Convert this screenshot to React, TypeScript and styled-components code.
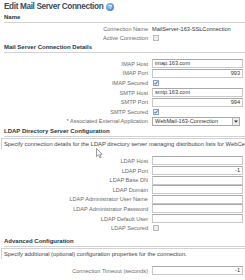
import styled, { createGlobalStyle } from 'styled-components';

const GlobalStyle = createGlobalStyle`
  body {
    margin: 0;
    background: #ffffff;
    font-family: 'Liberation Sans', Arial, sans-serif;
    color: #333333;
  }
`;

const Page = styled.div`
  position: relative;
  width: 245px;
  height: 280px;
  overflow: hidden;
  padding: 1px 0 0 4px;
  box-sizing: border-box;
`;

const Title = styled.h1`
  margin: 0;
  height: 11px;
  display: flex;
  align-items: center;
  gap: 3px;
  font-size: 8.2px;
  font-weight: bold;
  letter-spacing: -0.35px;
  color: #3b4b5b;
`;

const HelpIcon = styled.span`
  width: 8px;
  height: 8px;
  border-radius: 50%;
  background: radial-gradient(circle at 35% 35%, #9cc8f4, #2d6fc4);
  color: #ffffff;
  font-size: 6px;
  line-height: 8px;
  text-align: center;
  letter-spacing: 0;
`;

const SectionHeader = styled.h2<{ $top: number }>`
  margin: ${(p) => p.$top}px 0 0 0;
  height: 9px;
  line-height: 9px;
  font-size: 6px;
  font-weight: bold;
  color: #253545;
  border-bottom: 1px solid #d2d2d2;
`;

const Description = styled.div`
  margin: 1px 0 0 -3px;
  padding: 2px 0 0 2px;
  height: 8px;
  font-size: 5.8px;
  line-height: 6px;
  white-space: nowrap;
  color: #444444;
  border-top: 1px solid #d2d2d2;
  border-left: 1px solid #d2d2d2;
`;

const Fields = styled.div<{ $top: number }>`
  margin-top: ${(p) => p.$top}px;
  display: grid;
  grid-template-columns: 144px 91px;
  column-gap: 4px;
`;

const Label = styled.div<{ $h: number }>`
  height: ${(p) => p.$h}px;
  display: flex;
  align-items: center;
  justify-content: flex-end;
  font-size: 5.6px;
  color: #6a6a6a;
  white-space: nowrap;
`;

const Cell = styled.div<{ $h: number }>`
  height: ${(p) => p.$h}px;
  display: flex;
  align-items: center;
  font-size: 5.6px;
  color: #333333;
  white-space: nowrap;
`;

const Input = styled.div<{ $right?: boolean }>`
  width: 91px;
  height: 9px;
  box-sizing: border-box;
  border: 1px solid #c8c8c8;
  border-top-color: #a8a8a8;
  background: #ffffff;
  font-size: 5.6px;
  line-height: 7px;
  padding: 0 2px;
  text-align: ${(p) => (p.$right ? 'right' : 'left')};
  color: #333333;
`;

const Check = styled.span<{ $checked?: boolean }>`
  width: 6px;
  height: 6px;
  margin-left: 1px;
  box-sizing: border-box;
  border: 1px solid ${(p) => (p.$checked ? '#8aa4c4' : '#b8b8b8')};
  background: ${(p) => (p.$checked ? '#e8f0fa' : '#eeeeee')};
  display: flex;
  align-items: center;
  justify-content: center;
`;

const Select = styled.div`
  width: 88px;
  height: 9px;
  box-sizing: border-box;
  border: 1px solid #a8a8a8;
  display: flex;
  align-items: center;
  font-size: 5.6px;
  padding-left: 2px;
  justify-content: space-between;
`;

const SelectButton = styled.span`
  width: 7px;
  height: 7px;
  box-sizing: border-box;
  border-left: 1px solid #b8b8b8;
  background: #eeeeee;
  display: flex;
  align-items: center;
  justify-content: center;
`;

const Cursor = styled.svg`
  position: absolute;
  left: 96px;
  top: 148px;
`;

const Tick = () => (
  <svg width="4" height="4" viewBox="0 0 4 4">
    <path d="M0.5 2 L1.6 3.2 L3.6 0.5" stroke="#2a4e8a" strokeWidth="0.9" fill="none" />
  </svg>
);

type Row =
  | { label: string; kind: 'text'; value: string; h?: number }
  | { label: string; kind: 'input'; value?: string; right?: boolean; h?: number }
  | { label: string; kind: 'check'; checked?: boolean; h?: number }
  | { label: string; kind: 'select'; value: string; h?: number };

function FieldRows({ rows, top }: { rows: Row[]; top: number }) {
  return (
    <Fields $top={top}>
      {rows.map((r) => {
        const h = r.h ?? 9.6;
        return [
          <Label key={r.label + 'l'} $h={h}>{r.label}</Label>,
          <Cell key={r.label + 'c'} $h={h}>
            {r.kind === 'text' && r.value}
            {r.kind === 'input' && <Input $right={r.right}>{r.value}</Input>}
            {r.kind === 'check' && <Check $checked={r.checked}>{r.checked && <Tick />}</Check>}
            {r.kind === 'select' && (
              <Select>
                {r.value}
                <SelectButton>
                  <svg width="4" height="3" viewBox="0 0 4 3">
                    <path d="M0 0.5 L4 0.5 L2 2.8 Z" fill="#333" />
                  </svg>
                </SelectButton>
              </Select>
            )}
          </Cell>,
        ];
      })}
    </Fields>
  );
}

const nameRows: Row[] = [
  { label: 'Connection Name', kind: 'text', value: 'MailServer-163-SSLConnection', h: 9 },
  { label: 'Active Connection', kind: 'check', h: 9 },
];

const mailRows: Row[] = [
  { label: 'IMAP Host', kind: 'input', value: 'imap.163.com' },
  { label: 'IMAP Port', kind: 'input', value: '993', right: true },
  { label: 'IMAP Secured', kind: 'check', checked: true },
  { label: 'SMTP Host', kind: 'input', value: 'smtp.163.com' },
  { label: 'SMTP Port', kind: 'input', value: '994', right: true },
  { label: 'SMTP Secured', kind: 'check', checked: true },
  { label: '* Associated External Application', kind: 'select', value: 'WebMail-163-Connection' },
];

const ldapRows: Row[] = [
  { label: 'LDAP Host', kind: 'input' },
  { label: 'LDAP Port', kind: 'input', value: '-1', right: true },
  { label: 'LDAP Base DN', kind: 'input' },
  { label: 'LDAP Domain', kind: 'input' },
  { label: 'LDAP Administrator User Name', kind: 'input' },
  { label: 'LDAP Administrator Password', kind: 'input' },
  { label: 'LDAP Default User', kind: 'input' },
  { label: 'LDAP Secured', kind: 'check' },
];

const advancedRows: Row[] = [
  { label: 'Connection Timeout (seconds)', kind: 'input', value: '-1', right: true },
];

export default function App() {
  return (
    <>
      <GlobalStyle />
      <Page>
        <Title>
          Edit Mail Server Connection <HelpIcon>?</HelpIcon>
        </Title>
        <SectionHeader $top={1}>Name</SectionHeader>
        <FieldRows rows={nameRows} top={1} />
        <SectionHeader $top={1}>Mail Server Connection Details</SectionHeader>
        <FieldRows rows={mailRows} top={6} />
        <SectionHeader $top={1}>LDAP Directory Server Configuration</SectionHeader>
        <Description>
          Specify connection details for the LDAP directory server managing distribution lists for WebCenter
        </Description>
        <FieldRows rows={ldapRows} top={7} />
        <SectionHeader $top={4}>Advanced Configuration</SectionHeader>
        <Description>Specify additional (optional) configuration properties for the connection.</Description>
        <FieldRows rows={advancedRows} top={7} />
        <Cursor width="7" height="11" viewBox="0 0 7 11">
          <path d="M0.5 0.5 L0.5 8.5 L2.5 6.8 L4 10 L5.2 9.4 L3.8 6.3 L6.3 6.3 Z" fill="#ffffff" stroke="#555" strokeWidth="0.6" />
        </Cursor>
      </Page>
    </>
  );
}
